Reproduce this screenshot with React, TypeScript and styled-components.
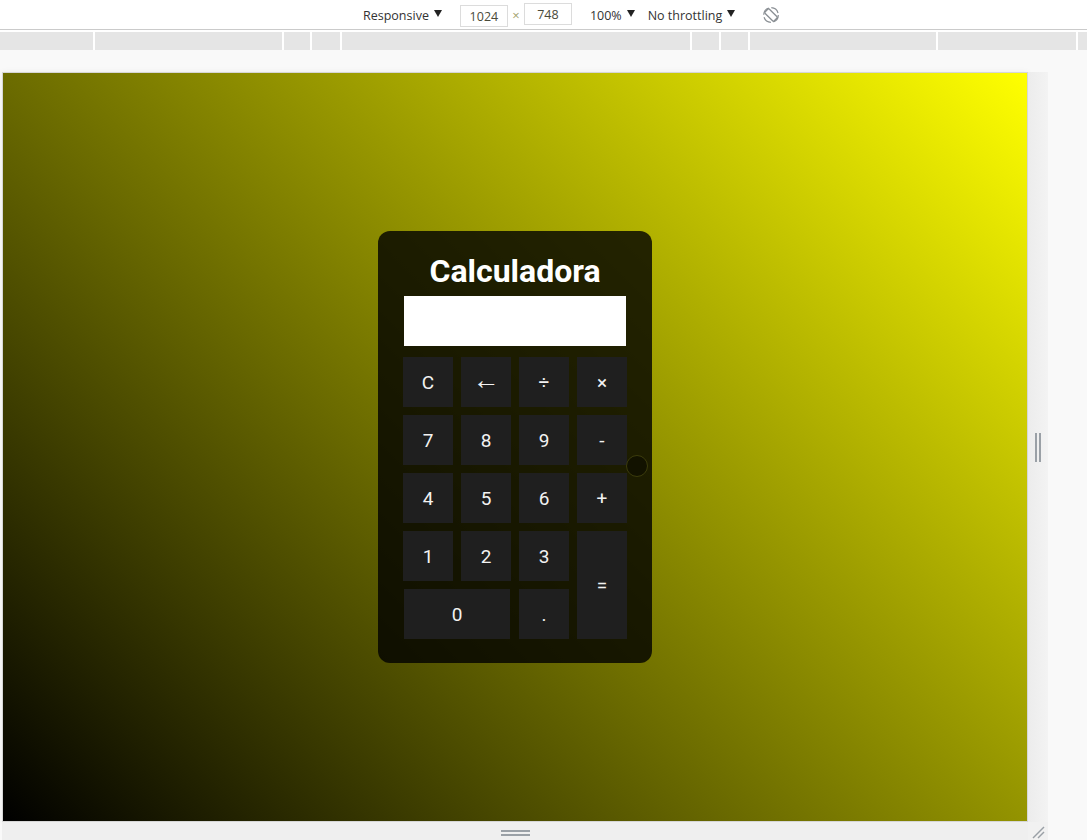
import styled, { createGlobalStyle } from 'styled-components'

const GlobalStyle = createGlobalStyle`
  html, body {
    margin: 0;
    padding: 0;
    background: #f9f9f9;
    overflow: hidden;
  }
  * {
    box-sizing: border-box;
  }
`

const Page = styled.div`
  width: 1087px;
  height: 840px;
  display: flex;
  flex-direction: column;
  font-family: 'Open Sans', 'Noto Sans', sans-serif;
`

const Toolbar = styled.div`
  height: 32px;
  background: #fff;
  border-top: 1px solid #fff;
  position: relative;
  display: flex;
  align-items: flex-start;
  padding-left: 363px;
  &::after {
    content: '';
    position: absolute;
    left: 0;
    right: 0;
    top: 28px;
    border-top: 1px solid #cbcbcb;
  }
`

const ToolItem = styled.div<{ $ml?: number }>`
  height: 28px;
  display: flex;
  align-items: center;
  gap: 5px;
  margin-left: ${(p) => p.$ml ?? 0}px;
  font-size: 12.5px;
  color: #333;
  white-space: nowrap;
`

const Caret = styled.span`
  width: 0;
  height: 0;
  border-left: 4px solid transparent;
  border-right: 4px solid transparent;
  border-top: 7px solid #222;
  margin-top: -3px;
`

const SizeInput = styled.div<{ $w: number }>`
  width: ${(p) => p.$w}px;
  height: 22px;
  margin-top: 2px;
  border: 1px solid #dcdcdc;
  background: #fff;
  display: flex;
  align-items: center;
  justify-content: center;
  font-size: 12.5px;
  color: #4a4a3a;
`

const Times = styled.span`
  width: 16px;
  height: 28px;
  display: flex;
  align-items: center;
  justify-content: center;
  color: #a3a36c;
  font-size: 13px;
`

const MediaBar = styled.div`
  height: 18px;
  display: flex;
  background: #fff;
`

const MediaSeg = styled.div`
  height: 18px;
  background: #e5e5e5;
  & + & {
    margin-left: 2px;
  }
`

const Stage = styled.div`
  flex: 1;
  padding: 22px 0 0 2px;
  display: flex;
  flex-direction: column;
`

const ViewRow = styled.div`
  display: flex;
`

const Viewport = styled.div`
  width: 1026px;
  height: 750px;
  border: 1px solid #d6d6d6;
  background: linear-gradient(45deg, #000 0%, #ff0 100%);
  display: flex;
  align-items: center;
  justify-content: center;
  box-shadow: 0 0 6px rgba(0, 0, 0, 0.06);
`

const SideStrip = styled.div`
  width: 20px;
  background: linear-gradient(to right, #ececec, #f3f3f3);
  display: flex;
  align-items: center;
  justify-content: center;
  gap: 2px;
`

const VBar = styled.span`
  width: 2px;
  height: 29px;
  background: #9aa0a6;
`

const BottomRow = styled.div`
  display: flex;
  height: 18px;
`

const BottomStrip = styled.div`
  width: 1026px;
  background: #efefef;
  display: flex;
  flex-direction: column;
  align-items: center;
  padding-top: 8px;
  gap: 2px;
`

const HBar = styled.span`
  width: 29px;
  height: 2px;
  background: #9aa0a6;
`

const Corner = styled.div`
  width: 20px;
  background: #f1f1f1;
  display: flex;
  align-items: flex-end;
  justify-content: center;
  padding-bottom: 1px;
`

const Card = styled.div`
  position: relative;
  width: 274px;
  padding: 21px 25px 24px;
  border-radius: 12px;
  background: rgba(0, 0, 0, 0.8);
  font-family: Roboto, 'Liberation Sans', sans-serif;
`

const Title = styled.h1`
  margin: 0 0 6px;
  text-align: center;
  font-size: 32px;
  font-weight: 700;
  color: #fff;
`

const Display = styled.div`
  width: 222px;
  height: 50px;
  margin: 0 auto 11px;
  background: #fff;
`

const Keys = styled.div`
  display: grid;
  grid-template-columns: repeat(4, 50px);
  grid-auto-rows: 50px;
  gap: 8px;
`

const Key = styled.div<{ $wide?: boolean; $tall?: boolean; $big?: boolean }>`
  background: #1f1f1f;
  color: #f2f2f2;
  font-size: ${(p) => (p.$big ? '27px' : '19px')};
  padding-bottom: ${(p) => (p.$big ? '5px' : '0')};
  display: flex;
  align-items: center;
  justify-content: center;
  grid-column: ${(p) => (p.$wide ? 'span 2' : 'auto')};
  grid-row: ${(p) => (p.$tall ? 'span 2' : 'auto')};
  margin-left: ${(p) => (p.$wide ? '1px' : '0')};
  margin-right: ${(p) => (p.$wide ? '1px' : '0')};
`

const TouchCursor = styled.span`
  position: absolute;
  left: 248px;
  top: 224px;
  width: 22px;
  height: 22px;
  border-radius: 50%;
  background: #121200;
  border: 1.5px solid #3c3c0c;
`

const cuts = [93, 282, 310, 340, 690, 719, 748, 936, 1076, 1087]

const keys: { label: string; wide?: boolean; tall?: boolean; big?: boolean }[] = [
  { label: 'C' },
  { label: '←', big: true },
  { label: '÷' },
  { label: '×' },
  { label: '7' },
  { label: '8' },
  { label: '9' },
  { label: '-' },
  { label: '4' },
  { label: '5' },
  { label: '6' },
  { label: '+' },
  { label: '1' },
  { label: '2' },
  { label: '3' },
  { label: '=', tall: true },
  { label: '0', wide: true },
  { label: '.' }
]

const RotateIcon = () => (
  <svg width='18' height='18' viewBox='0 0 18 18' fill='none'>
    <circle cx='9' cy='9' r='7.3' stroke='#8a8f94' strokeWidth='1.2' strokeDasharray='9 2.5' />
    <rect x='6' y='2.6' width='6' height='12.8' rx='1.2' transform='rotate(-45 9 9)' stroke='#8a8f94' strokeWidth='1.3' />
  </svg>
)

const CornerIcon = () => (
  <svg width='14' height='14' viewBox='0 0 14 14'>
    <line x1='2' y1='13' x2='13' y2='2' stroke='#9aa0a6' strokeWidth='1.5' />
    <line x1='7' y1='13' x2='13' y2='7' stroke='#9aa0a6' strokeWidth='1.5' />
  </svg>
)

export default function App() {
  let prev = 0
  return (
    <Page>
      <GlobalStyle />
      <Toolbar>
        <ToolItem>
          Responsive <Caret />
        </ToolItem>
        <ToolItem $ml={18}>
          <SizeInput $w={48}>1024</SizeInput>
        </ToolItem>
        <Times>×</Times>
        <SizeInput $w={48}>748</SizeInput>
        <ToolItem $ml={18}>
          100% <Caret />
        </ToolItem>
        <ToolItem $ml={13}>
          No throttling <Caret />
        </ToolItem>
        <ToolItem $ml={27}>
          <RotateIcon />
        </ToolItem>
      </Toolbar>
      <MediaBar>
        {cuts.map((c, i) => {
          const w = c - prev - (i === 0 ? 0 : 2)
          prev = c
          return <MediaSeg key={c} style={{ width: w }} />
        })}
      </MediaBar>
      <Stage>
        <ViewRow>
          <Viewport>
            <Card>
              <Title>Calculadora</Title>
              <Display />
              <Keys>
                {keys.map((k) => (
                  <Key key={k.label} $wide={k.wide} $tall={k.tall} $big={k.big}>
                    {k.label}
                  </Key>
                ))}
              </Keys>
              <TouchCursor />
            </Card>
          </Viewport>
          <SideStrip>
            <VBar />
            <VBar />
          </SideStrip>
        </ViewRow>
        <BottomRow>
          <BottomStrip>
            <HBar />
            <HBar />
          </BottomStrip>
          <Corner>
            <CornerIcon />
          </Corner>
        </BottomRow>
      </Stage>
    </Page>
  )
}
